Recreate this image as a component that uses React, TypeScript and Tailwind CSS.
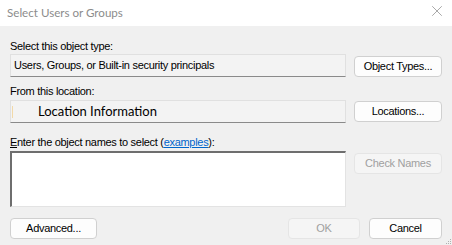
import { X } from "lucide-react";

const btn =
  "h-[21px] flex items-center justify-center rounded-[4px] border border-[#d0d0d0] bg-[#fdfdfd] text-[11px] tracking-[-0.3px] text-black";
const btnOff =
  "h-[21px] flex items-center justify-center rounded-[4px] border border-[#e5e5e5] bg-[#f5f5f5] text-[11px] tracking-[-0.3px] text-[#a0a0a0]";

function Field({ children }: { children: React.ReactNode }) {
  return (
    <div className="h-[23px] w-[336px] flex items-center border border-[#e0e0e0] border-b-[#8a8a8a] bg-[#f3f3f3]">
      {children}
    </div>
  );
}

export default function App() {
  return (
    <div
      className="w-[452px] h-[245px] flex flex-col bg-[#f0f0f0] overflow-hidden"
      style={{ fontFamily: "'Liberation Sans', Arial, sans-serif" }}
    >
      <div className="h-[26px] flex items-center justify-between bg-white pl-[7px] pr-[6px]">
        <span className="text-[11.6px] text-[#8c8c8c]" style={{ fontFamily: "Lato, sans-serif" }}>
          Select Users or Groups
        </span>
        <X className="w-[18px] h-[18px] mb-[4px] text-[#8c8c8c]" strokeWidth={1} />
      </div>

      <div className="relative flex flex-col grow px-[10px] pt-[13px]">
        <span className="text-[11px] leading-[14px] tracking-[-0.3px] text-black">Select this object type:</span>
        <div className="mt-[1px] flex flex-row items-end gap-[8px]">
          <Field>
            <span className="pl-[3px] text-[11px] tracking-[-0.3px] text-black">
              Users, Groups, or Built-in security principals
            </span>
          </Field>
          <button className={`${btn} w-[88px]`}>Object Types...</button>
        </div>

        <span className="mt-[7px] text-[11px] leading-[14px] tracking-[-0.3px] text-black">From this location:</span>
        <div className="mt-[2px] flex flex-row items-center gap-[8px]">
          <Field>
            <div className="ml-[1px] w-px h-[12px] bg-[#f2d9a8]" />
            <span className="pl-[25px] text-[13px] text-black" style={{ fontFamily: "Lato, sans-serif" }}>
              Location Information
            </span>
          </Field>
          <button className={`${btn} w-[88px]`}>Locations...</button>
        </div>

        <span className="mt-[12px] text-[11px] leading-[14px] tracking-[-0.3px] text-black">
          <span className="underline">E</span>nter the object names to select (
          <span className="text-[#0066cc] underline">examples</span>):
        </span>
        <div className="mt-[2px] flex flex-row items-start gap-[8px]">
          <div className="h-[56px] w-[336px] bg-white border-l-2 border-t-2 border-[#6e6e6e] border-r border-b border-r-[#e3e3e3] border-b-[#e3e3e3]" />
          <button className={`${btnOff} w-[88px] h-[20px] mt-[2px]`}>Check Names</button>
        </div>

        <div className="mt-[11px] flex flex-row items-center">
          <button className={`${btn} w-[87px]`}>Advanced...</button>
          <div className="grow" />
          <button className={`${btnOff} w-[72px]`}>OK</button>
          <button className={`${btn} w-[73px] ml-[9px] border-[#c4c4c4]`}>Cancel</button>
        </div>

        <div className="absolute right-[1px] bottom-[1px] grid grid-cols-3 gap-[1px]">
          {[0, 0, 1, 0, 1, 1, 1, 1, 1].map((v, i) => (
            <div key={i} className={v ? "w-[1px] h-[1px] bg-[#b0b0b0]" : "w-[1px] h-[1px]"} />
          ))}
        </div>
      </div>
    </div>
  );
}
